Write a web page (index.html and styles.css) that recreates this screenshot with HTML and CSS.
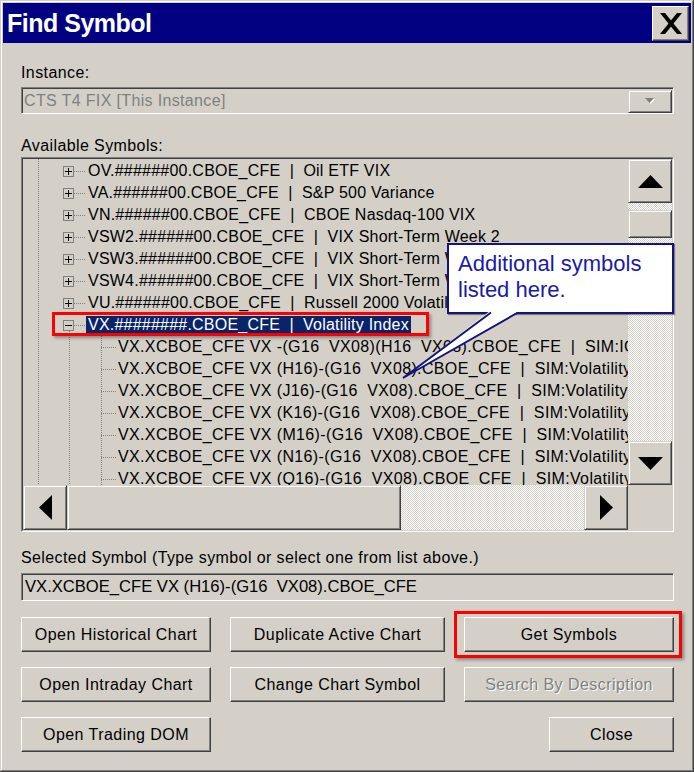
FILE: index.html
```html
<!DOCTYPE html>
<html lang="en">
<head>
    <meta charset="UTF-8">
    <title>Find Symbol</title>
    <link rel="stylesheet" href="styles.css">
</head>
<body>
    <div class="window">
        <div class="titlebar">
            <span class="title">Find Symbol</span>
            <button class="close-btn" type="button">
                <svg width="22" height="21" viewBox="0 0 22 21">
                    <polygon points="0,0 5,0 22,21 17,21" fill="#000"/>
                    <polygon points="17,0 22,0 5,21 0,21" fill="#000"/>
                </svg>
            </button>
        </div>

        <div class="content">
            <div class="field-label">Instance:</div>
            <div class="combo">
                <span class="combo-text">CTS T4 FIX [This Instance]</span>
                <span class="combo-btn">
                    <svg width="11" height="7" viewBox="0 0 11 7">
                        <polygon points="1,1 10,1 5.5,6" fill="#fff"/>
                        <polygon points="0,0 9,0 4.5,5" fill="#808080"/>
                    </svg>
                </span>
            </div>

            <div class="field-label avail-label">Available Symbols:</div>
            <!-- symbol tree with its scroll bars -->
            <div class="tree">
                <div class="tree-inner">
                    <div class="rows">
                        <div class="node"><span class="expander plus"></span><span class="stem"></span><span class="label">OV.######00.CBOE_CFE  |  Oil ETF VIX</span></div>
                        <div class="node"><span class="expander plus"></span><span class="stem"></span><span class="label">VA.######00.CBOE_CFE  |  S&amp;P 500 Variance</span></div>
                        <div class="node"><span class="expander plus"></span><span class="stem"></span><span class="label">VN.######00.CBOE_CFE  |  CBOE Nasdaq-100 VIX</span></div>
                        <div class="node"><span class="expander plus"></span><span class="stem"></span><span class="label">VSW2.######00.CBOE_CFE  |  VIX Short-Term Week 2</span></div>
                        <div class="node"><span class="expander plus"></span><span class="stem"></span><span class="label">VSW3.######00.CBOE_CFE  |  VIX Short-Term Week 3</span></div>
                        <div class="node"><span class="expander plus"></span><span class="stem"></span><span class="label">VSW4.######00.CBOE_CFE  |  VIX Short-Term Week 4</span></div>
                        <div class="node"><span class="expander plus"></span><span class="stem"></span><span class="label">VU.######00.CBOE_CFE  |  Russell 2000 Volatility Index</span></div>
                        <div class="node open"><span class="expander"></span><span class="stem"></span><span class="label selected">VX.########.CBOE_CFE  |  Volatility Index</span></div>
                        <div class="node child"><span class="stem"></span><span class="label">VX.XCBOE_CFE VX -(G16  VX08)(H16  VX08).CBOE_CFE  |  SIM:IG16 VX08-H16 VX08</span></div>
                        <div class="node child"><span class="stem"></span><span class="label">VX.XCBOE_CFE VX (H16)-(G16  VX08).CBOE_CFE  |  SIM:Volatility Index</span></div>
                        <div class="node child"><span class="stem"></span><span class="label">VX.XCBOE_CFE VX (J16)-(G16  VX08).CBOE_CFE  |  SIM:Volatility Index</span></div>
                        <div class="node child"><span class="stem"></span><span class="label">VX.XCBOE_CFE VX (K16)-(G16  VX08).CBOE_CFE  |  SIM:Volatility Index</span></div>
                        <div class="node child"><span class="stem"></span><span class="label">VX.XCBOE_CFE VX (M16)-(G16  VX08).CBOE_CFE  |  SIM:Volatility Index</span></div>
                        <div class="node child"><span class="stem"></span><span class="label">VX.XCBOE_CFE VX (N16)-(G16  VX08).CBOE_CFE  |  SIM:Volatility Index</span></div>
                        <div class="node child"><span class="stem"></span><span class="label">VX.XCBOE_CFE VX (Q16)-(G16  VX08).CBOE_CFE  |  SIM:Volatility Index</span></div>
                    </div>

                    <div class="vscroll">
                        <span class="sb-btn">
                            <svg width="25" height="13" viewBox="0 0 25 13"><polygon points="12.5,0 25,13 0,13" fill="#000"/></svg>
                        </span>
                        <span class="trough top-gap"></span>
                        <span class="sb-btn v-thumb"></span>
                        <span class="trough fill"></span>
                        <span class="sb-btn">
                            <svg width="25" height="13" viewBox="0 0 25 13"><polygon points="0,0 25,0 12.5,13" fill="#000"/></svg>
                        </span>
                    </div>

                    <div class="hscroll">
                        <span class="sb-btn">
                            <svg width="13" height="25" viewBox="0 0 13 25"><polygon points="13,0 13,25 0,12.5" fill="#000"/></svg>
                        </span>
                        <span class="sb-btn h-thumb"></span>
                        <span class="trough fill"></span>
                        <span class="sb-btn">
                            <svg width="13" height="25" viewBox="0 0 13 25"><polygon points="0,0 13,12.5 0,25" fill="#000"/></svg>
                        </span>
                    </div>

                    <div class="corner"></div>
                </div>
            </div>

            <div class="field-label selected-label">Selected Symbol (Type symbol or select one from list above.)</div>
            <div class="textbox">VX.XCBOE_CFE VX (H16)-(G16  VX08).CBOE_CFE</div>

            <div class="actions">
                <button class="btn" type="button">Open Historical Chart</button>
                <button class="btn" type="button">Duplicate Active Chart</button>
                <button class="btn marked" type="button">Get Symbols</button>
                <button class="btn" type="button">Open Intraday Chart</button>
                <button class="btn" type="button">Change Chart Symbol</button>
                <button class="btn" type="button" disabled>Search By Description</button>
                <button class="btn" type="button">Open Trading DOM</button>
                <span></span>
                <button class="btn close" type="button">Close</button>
            </div>
        </div>

        <!-- note bubble over the tree -->
        <div class="callout">Additional symbols<br>listed here.</div>
        <svg class="callout-tail" width="126" height="76" viewBox="398 306 126 76">
            <polygon points="490,311 403,378 519,311" fill="#fff"/>
            <polyline points="491,312.5 403,378 518,312.5" fill="none" stroke="#14147c" stroke-width="2" stroke-linejoin="miter"/>
        </svg>
    </div>
</body>
</html>
```

FILE: styles.css
```css
body {
    margin: 0;
    background: #d4d0c8;
    font-family: 'Liberation Sans', Arial, sans-serif;
    font-size: 16px;
    color: #000;
}
.window {
    position: relative;
    width: 694px;
    height: 772px;
    box-sizing: border-box;
    padding: 3px;
    background: #d4d0c8;
    box-shadow: inset -1px -1px #404040, inset 1px 1px #d4d0c8, inset -2px -2px #808080, inset 2px 2px #fff;
    overflow: hidden;
}
.titlebar {
    height: 40px;
    background: #000080;
    display: flex;
    align-items: center;
    justify-content: space-between;
    padding-left: 4px;
    padding-right: 2px;
}
.title {
    color: #fff;
    font-weight: bold;
    font-size: 25px;
    letter-spacing: -0.5px;
}
.close-btn {
    width: 37px;
    height: 35px;
    padding: 0;
    background: #d4d0c8;
    border: 1px solid;
    border-color: #fff #404040 #404040 #fff;
    box-shadow: inset -1px -1px #808080;
    display: flex;
    align-items: center;
    justify-content: center;
}
.content {
    padding: 21px 17px 0 18px;
}
.field-label {
    line-height: 18px;
    height: 18px;
    letter-spacing: 0.4px;
}
.avail-label {
    margin-top: 23px;
}
.selected-label {
    margin-top: 17px;
}
.combo {
    margin-top: 5px;
    height: 27px;
    box-sizing: border-box;
    border: 1px solid;
    border-color: #808080 #fff #fff #808080;
    box-shadow: inset 1px 1px #404040;
    display: flex;
    align-items: center;
    justify-content: space-between;
    padding: 1px 1px 0 2px;
}
.combo-text {
    color: #808080;
    letter-spacing: 0.35px;
}
.combo-btn {
    width: 44px;
    height: 23px;
    box-sizing: border-box;
    border: 1px solid;
    border-color: #d4d0c8 #404040 #404040 #d4d0c8;
    box-shadow: inset 1px 1px #fff, inset -1px -1px #808080;
    display: flex;
    align-items: center;
    justify-content: center;
}

/* tree */
.tree {
    margin-top: 2px;
    height: 375px;
    box-sizing: border-box;
    border: 1px solid;
    border-color: #808080 #fff #fff #808080;
}
.tree-inner {
    height: 100%;
    box-sizing: border-box;
    border: 1px solid;
    border-color: #404040 #d4d0c8 #d4d0c8 #404040;
    display: grid;
    grid-template-columns: 1fr 44px;
    grid-template-rows: 1fr 45px;
}
.rows {
    overflow: hidden;
    padding-top: 1px;
    background:
        repeating-linear-gradient(to bottom, #808080 0 1px, transparent 1px 2px) 15px 0 / 1px 100% no-repeat,
        repeating-linear-gradient(to bottom, #808080 0 1px, transparent 1px 2px) 46px 166px / 1px 100% no-repeat,
        repeating-linear-gradient(to bottom, #808080 0 1px, transparent 1px 2px) 78px 177px / 1px 100% no-repeat;
}
.node {
    position: relative;
    height: 22px;
    display: flex;
    align-items: center;
    white-space: pre;
    padding-left: 40px;
}
.node.child {
    padding-left: 78px;
}
.expander {
    position: relative;
    flex: none;
    width: 11px;
    height: 11px;
    box-sizing: border-box;
    border: 1px solid #808080;
    background: #d4d0c8;
}
.expander::before {
    content: "";
    position: absolute;
    left: 1px;
    top: 4px;
    width: 7px;
    height: 1px;
    background: #000;
}
.expander.plus::after {
    content: "";
    position: absolute;
    left: 4px;
    top: 1px;
    width: 1px;
    height: 7px;
    background: #000;
}
.stem {
    flex: none;
    width: 12px;
    height: 1px;
    background: repeating-linear-gradient(to right, #808080 0 1px, transparent 1px 2px);
}
.child .stem {
    width: 15px;
}
.label {
    line-height: 18px;
    height: 18px;
    padding: 0 2px;
    letter-spacing: 0.22px;
}
.child .label {
    letter-spacing: 0.36px;
}
.label.selected {
    background: #0a246a;
    color: #fff;
}
.node.open::after {
    content: "";
    position: absolute;
    left: 29px;
    top: -2px;
    width: 377px;
    height: 24px;
    box-sizing: border-box;
    border: 3px solid #f00;
    box-shadow: 2px 2px 3px rgba(0, 0, 0, 0.35);
}

/* scroll bars */
.sb-btn {
    flex: none;
    box-sizing: border-box;
    width: 44px;
    height: 44px;
    background: #d4d0c8;
    border: 1px solid;
    border-color: #d4d0c8 #404040 #404040 #d4d0c8;
    box-shadow: inset 1px 1px #fff, inset -1px -1px #808080;
    display: flex;
    align-items: center;
    justify-content: center;
}
.trough {
    background: repeating-conic-gradient(#fff 0 25%, #d4d0c8 0 50%) 0 0 / 2px 2px;
}
.trough.fill {
    flex: 1;
}
.vscroll {
    display: flex;
    flex-direction: column;
}
.top-gap {
    height: 7px;
}
.v-thumb {
    height: 28px;
}
.hscroll {
    display: flex;
}
.hscroll .sb-btn {
    height: 45px;
}
.h-thumb {
    width: 334px !important;
}
.corner {
    background: #d4d0c8;
}

.textbox {
    margin-top: 6px;
    height: 28px;
    box-sizing: border-box;
    border: 1px solid;
    border-color: #808080 #fff #fff #808080;
    box-shadow: inset 1px 1px #404040;
    padding: 0 3px;
    line-height: 26px;
    white-space: pre;
    font-size: 16.6px;
}

/* buttons */
.actions {
    margin-top: 16px;
    display: grid;
    grid-template-columns: 190px 215px 210px;
    grid-auto-rows: 35px;
    justify-content: space-between;
    row-gap: 15px;
}
.btn {
    font-family: 'Liberation Sans', Arial, sans-serif;
    font-size: 16px;
    letter-spacing: 0.45px;
    color: #000;
    padding: 0;
    background: #d4d0c8;
    border: 1px solid;
    border-color: #fff #404040 #404040 #fff;
    box-shadow: inset -1px -1px #808080;
}
.btn:disabled {
    color: #808080;
    text-shadow: 1px 1px #fff;
}
.btn.close {
    width: 125px;
    justify-self: end;
}
.btn.marked {
    position: relative;
}
.btn.marked::after {
    content: "";
    position: absolute;
    left: -11px;
    right: -9px;
    top: -7px;
    bottom: -7px;
    border: 3px solid #f00;
    box-shadow: 2px 2px 3px rgba(0, 0, 0, 0.35);
}

/* note bubble */
.callout {
    position: absolute;
    left: 447px;
    top: 243px;
    width: 227px;
    height: 71px;
    box-sizing: border-box;
    background: #fff;
    border: 2px solid #14147c;
    box-shadow: 1px 1px 1px rgba(0, 0, 0, 0.4);
    padding: 6px 0 0 9px;
    font-size: 22px;
    line-height: 26px;
    color: #1a1aa8;
}
.callout-tail {
    position: absolute;
    left: 398px;
    top: 306px;
}
```
